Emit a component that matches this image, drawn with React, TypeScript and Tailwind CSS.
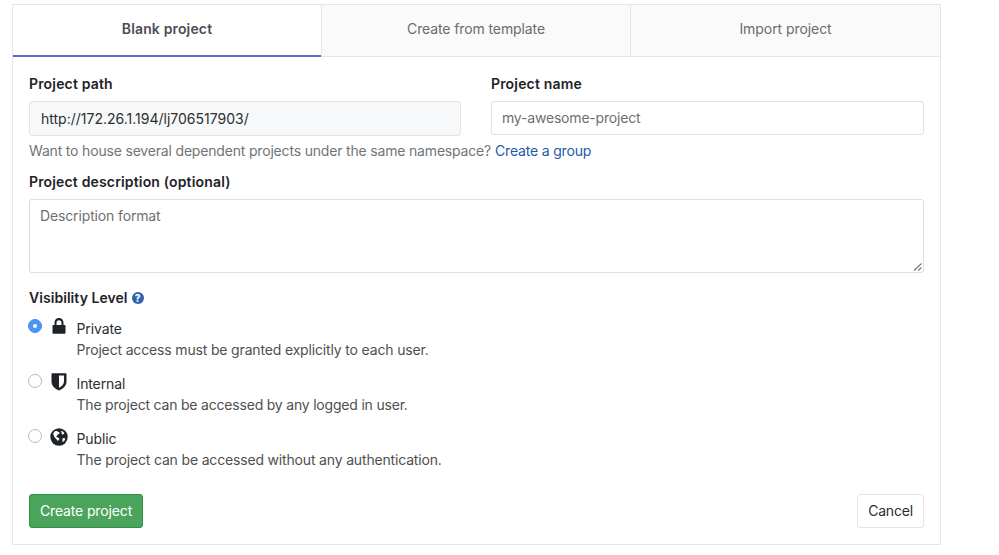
import type { ReactNode } from 'react';

function LockIcon() {
  return (
    <svg viewBox="0 0 16 18" className="h-[18px] w-4" fill="#1f2328">
      <path fillRule="evenodd" d="M3.500 7V4.800C3.500 2 5.300.1 8 .1s4.500 1.900 4.500 4.700V7h1c.6 0 1 .4 1 1v6.700c0 .6-.4 1-1 1h-11c-.6 0-1-.4-1-1V8c0-.6.4-1 1-1zM5.500 7h5V4.900c0-1.700-1-2.700-2.500-2.700S5.500 3.200 5.500 4.900z" />
    </svg>
  );
}

function ShieldIcon() {
  return (
    <svg viewBox="0 0 16 18" className="h-[18px] w-4" fill="#1f2328">
      <path fillRule="evenodd" d="M1.300.3h13.400c.5 0 .8.300.8.800v7.200c0 4.700-3.300 7.300-7.500 9.300C3.800 15.600.5 13 .5 8.300V1.100c0-.5.300-.8.800-.800zM8 2.500v12.200c3.200-1.700 5-3.200 5-6.700V2.500z" />
    </svg>
  );
}

function EarthIcon() {
  return (
    <svg viewBox="0 0 18 18" className="h-[18px] w-[18px]">
      <circle cx="9" cy="9" r="8.700" fill="#1f2328" />
      <path fill="#fff" d="M3.200 5.400 4.500 3.600 6.300 2.700 7.500 3.500 9.500 4.300 9.400 5.400 8.200 6.600 7.300 7.100 6.900 8.200 6 8.400 7 9.200 8.900 10 9.400 11.100 8.600 12.300 7.700 13.100 6.700 11.500 5.100 10.100 4 8.300 3.600 6.800z" />
      <path fill="#fff" d="M11.200 2.900 13 3.600 14.300 5 14 6.100 12.500 6.600 11.400 5.900 12 4.800 11 4z" />
      <path fill="#fff" d="M12.500 10.600 14 10.100 15.300 10.700 14.600 12.400 13.200 13.800 12.300 13.700 12.500 12.500z" />
    </svg>
  );
}

function Radio({ checked = false }: { checked?: boolean }) {
  return checked ? (
    <span className="flex h-[14px] w-[14px] items-center justify-center rounded-full border border-[#438df0] bg-[#4a95fa]">
      <span className="h-1 w-1 rounded-full bg-white" />
    </span>
  ) : (
    <span className="block h-[14px] w-[14px] rounded-full border border-[#b9b9b9] bg-white" />
  );
}

type LevelProps = { icon: ReactNode; title: ReactNode; text: ReactNode; checked?: boolean };

function Level({ icon, title, text, checked }: LevelProps) {
  return (
    <div className="-ml-px flex h-[55px]">
      <div className="w-[22px] pt-px"><Radio checked={checked} /></div>
      <div className="flex w-[18.500px] justify-center">{icon}</div>
      <div className="ml-2 pt-[1px]">
        <div className="h-[21px] tracking-[-0.12px] text-[#2e2e2e]">{title}</div>
        <div className="text-[#4f4f4f]">{text}</div>
      </div>
    </div>
  );
}

export default function App() {
  return (
    <div className="h-[555px] w-[999px] bg-white pt-1 pl-3 font-['Inter',sans-serif] text-[14px] leading-5 whitespace-nowrap text-[#2e2e2e]">
      <div className="h-[541px] w-[929px] border border-[#e5e5e5]">
        <div className="flex h-[52px] text-center leading-[48px] text-[#6b6b6b]">
          <div className="w-[308px] border-b-2 border-[#6666c4] font-semibold tracking-[0.15px] text-[#4c4e54]"><span>Blank project</span></div>
          <div className="w-[309px] border-b border-l border-[#e5e5e5] bg-[#fafafa] tracking-[-0.11px]"><span>Create from template</span></div>
          <div className="w-[310px] border-b border-l border-[#e5e5e5] bg-[#fafafa] tracking-[-0.07px]"><span>Import project</span></div>
        </div>
        <div className="px-4 pt-[17px]">
          <div className="flex gap-[30px]">
            <div className="w-[432px]">
              <div className="font-semibold tracking-[0.17px] text-[#1f2328]"><span>Project path</span></div>
              <div className="mt-[7px] h-[35px] rounded-[3px] border border-[#e3e4e6] bg-[#f6f8fa] pl-[11px] leading-[34px]"><span>http://172.26.1.194/lj706517903/</span></div>
            </div>
            <div className="w-[433px]">
              <div className="font-semibold tracking-[0.17px] text-[#1f2328]"><span>Project name</span></div>
              <div className="mt-[7px] h-[34px] rounded-[3px] border border-[#e1e1e1] pl-[10px] leading-8 tracking-[-0.19px] text-[#6f6f6f]"><span>my-awesome-project</span></div>
            </div>
          </div>
          <div className="mt-[5px] flex gap-1 tracking-[-0.18px] text-[#707579]">
            <span>Want to house several dependent projects under the same namespace?</span>
            <a className="text-[#2559a8]">Create a group</a>
          </div>
          <div className="mt-[11px] font-semibold tracking-[0.16px] text-[#1f2328]"><span>Project description (optional)</span></div>
          <div className="mt-[7px] flex h-[74px] w-[895px] justify-between rounded-[3px] border border-[#dfdfdf] pt-[6px] pl-[10px] tracking-[-0.14px] text-[#6f6f6f]">
            <span>Description format</span>
            <svg viewBox="0 0 10 10" className="h-[10px] w-[10px] self-end" stroke="#777" strokeWidth="1.100" fill="none">
              <path d="M1 8.500 8.500 1.500M5.200 8.500 8.500 5.500" />
            </svg>
          </div>
          <div className="mt-[15px] flex items-center gap-1 font-semibold text-[#1f2328]">
            <span className="tracking-[0.05px]">Visibility Level</span>
            <span className="flex h-3 w-3 items-center justify-center rounded-full bg-[#2d62ad] text-[10px] leading-3 font-extrabold text-white">?</span>
          </div>
          <div className="mt-[10px]">
            <Level checked icon={<LockIcon />} title={<span>Private</span>} text={<span className="tracking-[-0.16px]">Project access must be granted explicitly to each user.</span>} />
            <Level icon={<ShieldIcon />} title={<span>Internal</span>} text={<span className="tracking-[-0.2px]">The project can be accessed by any logged in user.</span>} />
            <Level icon={<EarthIcon />} title={<span>Public</span>} text={<span className="tracking-[-0.17px]">The project can be accessed without any authentication.</span>} />
          </div>
          <div className="mt-[11px] flex w-[895px] justify-between">
            <button className="h-[34px] w-[114px] rounded-[3px] border border-[#2f9146] bg-[#4ba45b] tracking-[-0.14px] text-white">Create project</button>
            <button className="h-[34px] w-[67px] rounded-[3px] border border-[#e5e5e5] bg-white tracking-[-0.2px]">Cancel</button>
          </div>
        </div>
      </div>
    </div>
  );
}
